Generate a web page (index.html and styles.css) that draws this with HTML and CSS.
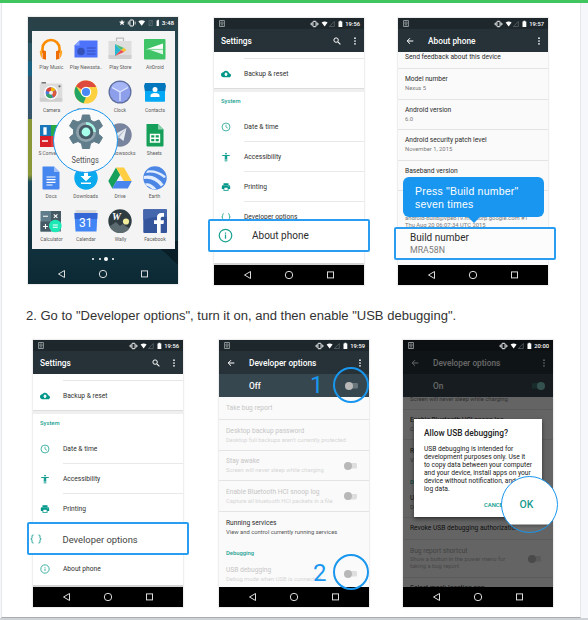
FILE: index.html
```html
<!DOCTYPE html>
<html lang="en">
<head>
<meta charset="utf-8">
<title>Enable USB debugging</title>
<link rel="stylesheet" href="styles.css">
</head>
<body>
<svg width="0" height="0" class="defs">
  <symbol id="sim" viewBox="0 0 6 7"><path d="M.6.5h4.8v6H.6z" fill="none" stroke="#aab0b3" stroke-width=".8"/><path d="M2 2h2v2H2zM1.8 5h2.4" stroke="#aab0b3" stroke-width=".6" fill="none"/></symbol>
  <symbol id="tray" viewBox="0 0 34 8">
    <rect x="2.9" y="1.300" width="3.200" height="5.400" rx=".7" fill="none" stroke="#fff" stroke-width="1"/>
    <path d="M1.500 2.600v2.800M7.500 2.600v2.800M.5 3.500v1M8.500 3.500v1" stroke="#fff" stroke-width=".7"/>
    <path d="M11.600 2.400q3-2 6 0L14.600 6.500z" fill="#fff"/>
    <path d="M24.300 1.500v5H19.400z" fill="none" stroke="#69757a" stroke-width=".6"/>
    <path d="M28.500 1.500h1V.8h1.800v.7h1v5.600h-3.800z" fill="#fff"/>
  </symbol>
  <symbol id="search" viewBox="0 0 8 8"><circle cx="3.100" cy="3.100" r="2.200" fill="none" stroke="#fff" stroke-width="1"/><path d="M4.800 4.800l2.600 2.600" stroke="#fff" stroke-width="1.100"/></symbol>
  <symbol id="more" viewBox="0 0 4 8"><circle cx="2" cy="1.200" r=".85" fill="#fff"/><circle cx="2" cy="4" r=".85" fill="#fff"/><circle cx="2" cy="6.800" r=".85" fill="#fff"/></symbol>
  <symbol id="back" viewBox="0 0 8 8"><path d="M7.300 4H1.300M4 1.200L1.200 4 4 6.800" fill="none" stroke="#fff" stroke-width="1"/></symbol>
  <symbol id="nav" viewBox="0 0 150 20"><path d="M36.500 6.500v7L30.500 10z" fill="none" stroke="#ddd" stroke-width="1"/><circle cx="75" cy="10" r="3.700" fill="none" stroke="#ddd" stroke-width="1"/><rect x="113.500" y="6.900" width="6" height="6" fill="none" stroke="#ddd" stroke-width="1"/></symbol>
  <symbol id="cloud" viewBox="0 0 24 24"><path fill="#009688" d="M19.350 10.040C18.670 6.590 15.640 4 12 4 9.110 4 6.600 5.640 5.350 8.040 2.340 8.360 0 10.910 0 14c0 3.310 2.690 6 6 6h13c2.760 0 5-2.240 5-5 0-2.640-2.050-4.780-4.650-4.960zM14 13v4h-4v-4H7l5-5 5 5h-3z"/></symbol>
  <symbol id="clock" viewBox="0 0 24 24"><circle cx="12" cy="12" r="9.500" fill="none" stroke="#26a699" stroke-width="2"/><path d="M12 6.500V12l4.500 3" fill="none" stroke="#26a699" stroke-width="1.800"/></symbol>
  <symbol id="access" viewBox="0 0 24 24"><path fill="#149f91" d="M12 1.500a2.200 2.200 0 1 1 0 4.400 2.200 2.200 0 0 1 0-4.400zM21 9.300h-6V22.500h-2.100v-6h-1.800v6H9V9.300H3V7h18z"/></symbol>
  <symbol id="print" viewBox="0 0 24 24"><path fill="#009688" d="M19 8H5c-1.660 0-3 1.340-3 3v6h4v4h12v-4h4v-6c0-1.660-1.340-3-3-3zm-3 11H8v-5h8v5zm3-7c-.55 0-1-.45-1-1s.45-1 1-1 1 .45 1 1-.45 1-1 1zm-1-9H6v4h12V3z"/></symbol>
  <symbol id="braces" viewBox="0 0 24 24"><path fill="none" stroke="#26a699" stroke-width="2" d="M7 4H6Q4 4 4 6v3.500Q4 12 1.500 12 4 12 4 14.500V18q0 2 2 2h1M17 4h1q2 0 2 2v3.500q0 2.500 2.500 2.500Q20 12 20 14.500V18q0 2-2 2h-1"/></symbol>
  <symbol id="info" viewBox="0 0 24 24"><circle cx="12" cy="12" r="10" fill="none" stroke="#1aa192" stroke-width="2"/><path fill="#1aa192" d="M11 10.500h2V17h-2zM11 7h2v2h-2z"/></symbol>
</svg>

<div class="topbar"></div>
<main class="card">
  <section class="shots first">

    <div class="phone launcher">
      <div class="wall-status">
        <svg width="40" height="8" viewBox="0 0 40 8"><path d="M3 .6l.8 2 2.200.1-1.700 1.400.6 2.200L3 5.100 1.100 6.300l.6-2.200L0 2.700l2.200-.1z" fill="#fff"/><rect x="10.900" y="1" width="3.600" height="6" rx=".6" fill="none" stroke="#fff"/><path d="M9.300 2.500v3M16.100 2.500v3" stroke="#fff" stroke-width=".8"/><path d="M19.300 2.300q3.400-2 6.800 0L22.700 6.800z" fill="#fff"/><path d="M30 1.500h3.300v5h-3.300zM30 6.500l3.300-5" stroke="#66787f" stroke-width=".6" fill="none"/><path d="M37.600 1.500h1V.8h1.300v6.300h-2.300z" fill="#fff"/></svg>
        <span>3:48</span>
      </div>
      <div class="drawer">
        <div class="app"><svg viewBox="0 0 24 24"><path d="M3.500 16V11.500a8.500 8.500 0 0 1 17 0V16" fill="none" stroke="#fb8c00" stroke-width="2.600"/><path d="M.8 14L3 12.500V21Q.8 19 .8 14zM23.200 14L21 12.500V21q2.200-2 2.200-7z" fill="#ffa726"/><path d="M3.500 13l3.500 1.200v8.500l-3.500-1zM20.500 13L17 14.200v8.500l3.500-1z" fill="#ef6c00"/></svg><span>Play Music</span></div>
        <div class="app"><svg viewBox="0 0 24 24"><path d="M5.500 3.500H23.500v17H.5V8.500z" fill="#4d73fb"/><path d="M.5 8.500h5v-5z" fill="#86a1ff"/><circle cx="7" cy="14.500" r="3.800" fill="#3451b8"/><path d="M13 11h8.500M13 14h8.500M13 17h8.500" stroke="#3c5bd0" stroke-width="1.500"/></svg><span>Play Newssta..</span></div>
        <div class="app"><svg viewBox="0 0 24 24"><path d="M8.500 5V1.200h7V5" fill="none" stroke="#bdbdbd" stroke-width="1.200"/><path d="M.5 4h23v17q0 1-1 1h-21q-1 0-1-1z" fill="#dedede"/><path d="M.5 18h23v3q0 1-1 1h-21q-1 0-1-1z" fill="#cfcfcf"/><path d="M7 7l6 6-6 6z" fill="#29b6d0"/><path d="M7 7l9 4-3 2z" fill="#50bd77"/><path d="M13 13l3-2 2.500 2L16 15z" fill="#fbc02d"/><path d="M13 13l3 2-9 4z" fill="#ed4b55"/></svg><span>Play Store</span></div>
        <div class="app"><svg viewBox="0 0 24 24"><rect x="1" y="2" width="21.500" height="20.500" rx="1" fill="#3ec466"/><path d="M2.500 12.500L20 6.500v6z" fill="#fff"/><path d="M6 12.500h14v5z" fill="#dff5e5"/><path d="M2.500 12.300H20" stroke="#3ec466" stroke-width=".5"/></svg><span>AirDroid</span></div>

        <div class="app"><svg viewBox="0 0 24 24"><path d="M2.500 2h4.500v2H2.500z" fill="#777"/><rect x=".8" y="3.500" width="22.500" height="18.500" rx="1" fill="#dcdcdc"/><path d="M.8 18h22.500v3.500H.8z" fill="#cfcfcf"/><circle cx="20.500" cy="6.300" r="1.100" fill="#666"/><circle cx="12" cy="12.700" r="7" fill="#fafafa"/><circle cx="12" cy="12.700" r="5.400" fill="#4b7bd6"/><path d="M12 12.700V7.300a5.400 5.400 0 0 1 4.700 2.700z" fill="#f4b400"/><path d="M12 12.700V7.300A5.400 5.400 0 0 0 7 10.700z" fill="#db4437"/><path d="M12 12.700l5-2.200a5.400 5.400 0 0 1-2.500 7z" fill="#e0593c"/><path d="M12 12.700L7 15a5.400 5.400 0 0 0 6 3z" fill="#33a362"/><circle cx="12" cy="12.700" r="2" fill="#eee"/></svg><span>Camera</span></div>
        <div class="app"><svg viewBox="0 0 24 24"><circle cx="12" cy="12" r="11.500" fill="#fcd03f"/><path d="M12 12L2 6.300A11.500 11.500 0 0 1 22.300 7H12z" fill="#de4b3e"/><path d="M2 6.300L7.500 14.500 12 17l-2.500 6.200A11.500 11.500 0 0 1 2 6.300z" fill="#23a566"/><circle cx="12" cy="12" r="5.200" fill="#fff"/><circle cx="12" cy="12" r="4.100" fill="#4a89f4"/></svg><span>Chrome</span></div>
        <div class="app"><svg viewBox="0 0 24 24"><circle cx="12" cy="12" r="11.500" fill="#5c6c9c"/><circle cx="12" cy="12" r="10.300" fill="#8d9fea"/><path d="M12 12L3.300 7A10 10 0 0 1 20.700 7z" fill="#a5b5f5"/><path d="M12 21V12L4 7.500M12 12l8-4.500" stroke="#dfe6ff" stroke-width="1.300" fill="none"/></svg><span>Clock</span></div>
        <div class="app"><svg viewBox="0 0 24 24"><path d="M2 3h20l1 3-1 6H2L1 6z" fill="#0277bd"/><path d="M2 11h20v10q0 .8-.8.8H2.800q-.8 0-.8-.8z" fill="#03a9f4"/><circle cx="12" cy="9.500" r="2.500" fill="#fff"/><path d="M7.500 17v-1.500q0-2.500 4.500-2.500t4.500 2.500V17z" fill="#fff"/></svg><span>Contacts</span></div>

        <div class="app"><svg viewBox="0 0 24 24"><path d="M1 2h11v11H1z" fill="#1976b9"/><path d="M12 2h11v11H12z" fill="#26a844"/><path d="M1 13h11v11H1z" fill="#d81f28"/><path d="M12 13h11v11H12z" fill="#e53935"/><path d="M5 5h2v6H5zM3 18h6" stroke="#fff" stroke-width="1.300" fill="#fff"/></svg><span>S Converter</span></div>
        <div class="app"></div>
        <div class="app"><svg viewBox="0 0 24 24"><circle cx="12" cy="12" r="11.700" fill="#78849e"/><path d="M4.500 12.500L18.500 5l-3 13-4.500-3.500z" fill="#e6eaf1"/><path d="M18.500 5L9 14v4l2-3.500z" fill="#aeb8ca"/></svg><span>Shadowsocks</span></div>
        <div class="app"><svg viewBox="0 0 24 24"><path d="M3.500 1H15l5.500 5.500v16q0 1-1 1h-15q-1 0-1-1z" fill="#169f59"/><path d="M15 1v5.500h5.500z" fill="#8bd0ad"/><path d="M7.500 11.500h9v7.500h-9zM7.500 15.300h9M12 11.500v7.500" fill="none" stroke="#fff" stroke-width="1.400"/></svg><span>Sheets</span></div>

        <div class="app"><svg viewBox="0 0 24 24"><path d="M4 .5H15L20.500 6v16.500q0 1-1 1H4.500q-1 0-1-1V1.500q0-1 .5-1z" fill="#4686ef"/><path d="M15 .5V6h5.500z" fill="#a3c1f8"/><path d="M7.500 11h9M7.500 13.700h9M7.500 16.300h9M7.500 19h6" stroke="#fff" stroke-width="1.200"/></svg><span>Docs</span></div>
        <div class="app"><svg viewBox="0 0 24 24"><circle cx="12" cy="12" r="11.700" fill="#0ba9ee"/><path d="M10 5h4v5h3.500L12 15.300 6.500 10H10zM7 16.500h10V18H7z" fill="#fff"/></svg><span>Downloads</span></div>
        <div class="app"><svg viewBox="0 0 24 24"><path d="M8 1.500L.3 15l4 7.500 7.900-13.800z" fill="#15a05c"/><path d="M8 1.500h8L23.800 15h-8z" fill="#ffce42"/><path d="M8.500 15h15.300l-4 7.500H4.300z" fill="#4885ed"/></svg><span>Drive</span></div>
        <div class="app"><svg viewBox="0 0 24 24"><circle cx="12" cy="12" r="11.700" fill="#4c86e5"/><path d="M4.500 4.500Q14 3.500 22.500 10 23 12 21 12 12 5 3 7zM1 10q11-2.500 19.500 8.500L18 20.500Q11 11.500.7 13zM2 17.500q6-1 11.500 5.500-2 .7-4 .3Q6 20 3 19.500z" fill="#e2edff"/></svg><span>Earth</span></div>

        <div class="app"><svg viewBox="0 0 24 24"><path d="M1.500 2h20.500v20.500H1.500z" fill="#607d8b"/><path d="M12 2h10v10.500H12zM1.500 12.500H12v10H1.500z" fill="#455a64"/><path d="M4 7.300h5M14.800 5.300l3.600 3.600M18.400 5.300l-3.600 3.600M4 17.500h5M6.500 15v5" stroke="#fff" stroke-width="1.100"/><circle cx="16.300" cy="17" r="6.300" fill="#1de9b6"/><path d="M13.800 16h5M13.800 18.300h5" stroke="#fff" stroke-width="1.100"/></svg><span>Calculator</span></div>
        <div class="app cal"><svg viewBox="0 0 24 24"><path d="M1.500 1.200h21V6h-21z" fill="#d8d8d8"/><path d="M.5 4h23l-1 18.500h-21z" fill="#4285f4"/><path d="M.5 4h23l-.3 6H.8z" fill="#3367d6"/></svg><b>31</b><span>Calendar</span></div>
        <div class="app wally"><svg viewBox="0 0 24 24"><circle cx="12" cy="12" r="11.700" fill="#2f3d43"/><path d="M1.500 17.500L8 13l4 4 2.500-2 7 4.500A11.700 11.700 0 0 1 1.500 17.500z" fill="#5c6b70"/><circle cx="18" cy="12.500" r="3.100" fill="#f3ee9c"/></svg><b>W</b><span>Wally</span></div>
        <div class="app"><svg viewBox="0 0 24 24"><rect x=".3" y=".3" width="23.700" height="23.700" rx="1" fill="#34549c"/><path d="M.3 1.300q0-1 1-1H23q1 0 1 1V8Q12 6 .3 11z" fill="#4467ae"/><path d="M14 24v-9h-3v-3.700h3V8.500Q14 4 18.500 4H21v3.700h-1.800q-1.500 0-1.500 1.500v2.100H21l-.5 3.700h-2.800v9z" fill="#fff"/></svg><span>Facebook</span></div>
      </div>
      <div class="dots"><i></i><i></i><i class="on"></i><i></i></div>
      <svg class="navicons" width="150" height="20"><use href="#nav"/></svg>
      <div class="lens">
        <svg width="36" height="36" viewBox="0 0 36 36"><path d="M14.500 1h7l1 5 3.500 2 5-2 3.500 6-4 3.500v4.500l4 3.500-3.500 6-5-2-3.500 2-1 5h-7l-1-5-3.500-2-5 2-3.500-6 4-3.500v-4.500l-4-3.500L5 6l5 2 3.500-2z" fill="#607d8b" stroke="#607d8b" stroke-linejoin="round"/><circle cx="18" cy="18" r="10" fill="#8fa3ad"/><path d="M18 8a10 10 0 0 1 10 10h-4a6 6 0 0 0-6-6z" fill="#a7f5e4"/><circle cx="18" cy="18" r="7.300" fill="#455a64"/><circle cx="18" cy="18" r="4.400" fill="#a7ffeb"/></svg>
        <span>Settings</span>
      </div>
    </div>

    <div class="phone settings">
      <div class="status"><svg width="6" height="7"><use href="#sim"/></svg><span class="grow"></span><svg width="34" height="8"><use href="#tray"/></svg><span class="time">19:56</span></div>
      <div class="bar"><b>Settings</b><svg width="8" height="8"><use href="#search"/></svg><svg class="menu" width="4" height="8"><use href="#more"/></svg></div>
      <div class="screen white">
        <div class="stub"></div>
        <div class="item backup"><svg><use href="#cloud"/></svg><span>Backup &amp; reset</span></div>
        <div class="band"></div>
        <div class="section">System</div>
        <div class="item"><svg><use href="#clock"/></svg><span>Date &amp; time</span></div>
        <div class="item"><svg><use href="#access"/></svg><span>Accessibility</span></div>
        <div class="item"><svg><use href="#print"/></svg><span>Printing</span></div>
        <div class="item last"><svg><use href="#braces"/></svg><span>Developer options</span></div>
      </div>
      <div class="navbar"><svg width="150" height="20"><use href="#nav"/></svg></div>
      <div class="focus about"><svg width="15" height="15"><use href="#info"/></svg><span>About phone</span></div>
    </div>

    <div class="phone detail">
      <div class="status"><svg width="6" height="7"><use href="#sim"/></svg><span class="grow"></span><svg width="34" height="8"><use href="#tray"/></svg><span class="time">19:57</span></div>
      <div class="bar sub"><svg width="8" height="8"><use href="#back"/></svg><b>About phone</b><svg class="menu" width="4" height="8"><use href="#more"/></svg></div>
      <div class="screen">
        <div class="row top"><span>Send feedback about this device</span></div>
        <div class="row"><span>Model number</span><small>Nexus 5</small></div>
        <div class="row"><span>Android version</span><small>6.0</small></div>
        <div class="row"><span>Android security patch level</span><small>November 1, 2015</small></div>
        <div class="row"><span>Baseband version</span><small>&nbsp;</small></div>
        <div class="row kernel"><small>android-build@vpeb19.mtv.corp.google.com #1</small><small>Thu Aug 20 06:07:34 UTC 2015</small></div>
      </div>
      <div class="navbar"><svg width="150" height="20"><use href="#nav"/></svg></div>
      <div class="tip">Press "Build number"<br>seven times</div>
      <div class="focus build"><span>Build number</span><small>MRA58N</small></div>
    </div>
  </section>

  <p class="step">2. Go to "Developer options", turn it on, and then enable "USB debugging".</p>

  <section class="shots second">
    <div class="phone settings">
      <div class="status"><svg width="6" height="7"><use href="#sim"/></svg><span class="grow"></span><svg width="34" height="8"><use href="#tray"/></svg><span class="time">19:56</span></div>
      <div class="bar"><b>Settings</b><svg width="8" height="8"><use href="#search"/></svg><svg class="menu" width="4" height="8"><use href="#more"/></svg></div>
      <div class="screen white">
        <div class="stub"></div>
        <div class="item backup"><svg><use href="#cloud"/></svg><span>Backup &amp; reset</span></div>
        <div class="band"></div>
        <div class="section">System</div>
        <div class="item"><svg><use href="#clock"/></svg><span>Date &amp; time</span></div>
        <div class="item"><svg><use href="#access"/></svg><span>Accessibility</span></div>
        <div class="item"><svg><use href="#print"/></svg><span>Printing</span></div>
        <div class="item gap"></div>
        <div class="item last"><svg><use href="#info"/></svg><span>About phone</span></div>
      </div>
      <div class="navbar"><svg width="150" height="20"><use href="#nav"/></svg></div>
      <div class="focus dev"><svg width="12" height="12"><use href="#braces"/></svg><span>Developer options</span></div>
    </div>

    <div class="phone options">
      <div class="status"><svg width="6" height="7"><use href="#sim"/></svg><span class="grow"></span><svg width="34" height="8"><use href="#tray"/></svg><span class="time">19:59</span></div>
      <div class="bar sub"><svg width="8" height="8"><use href="#back"/></svg><b>Developer options</b><svg class="menu" width="4" height="8"><use href="#more"/></svg></div>
      <div class="master"><b>Off</b><i class="switch"></i></div>
      <div class="screen">
        <div class="row short off"><span>Take bug report</span></div>
        <div class="row off"><span>Desktop backup password</span><small>Desktop full backups aren't currently protected</small></div>
        <div class="row off"><span>Stay awake</span><small>Screen will never sleep while charging</small><i class="switch"></i></div>
        <div class="row off"><span>Enable Bluetooth HCI snoop log</span><small>Capture all bluetooth HCI packets in a file</small><i class="switch"></i></div>
        <div class="row on"><span>Running services</span><small>View and control currently running services</small></div>
        <div class="section">Debugging</div>
        <div class="row off plain"><span>USB debugging</span><small>Debug mode when USB is connected</small><i class="switch"></i></div>
      </div>
      <div class="navbar"><svg width="150" height="20"><use href="#nav"/></svg></div>
      <div class="ring one"></div><div class="num n1">1</div>
      <div class="ring two"></div><div class="num n2">2</div>
    </div>

    <div class="phone confirm">
      <div class="status"><svg width="6" height="7"><use href="#sim"/></svg><span class="grow"></span><svg width="34" height="8"><use href="#tray"/></svg><span class="time">20:00</span></div>
      <div class="bar sub"><svg width="8" height="8"><use href="#back"/></svg><b>Developer options</b><svg class="menu" width="4" height="8"><use href="#more"/></svg></div>
      <div class="master"><b>On</b><i class="switch lit"></i></div>
      <div class="screen">
        <div class="row cut"><small>Screen will never sleep while charging</small></div>
        <div class="row"><span>Enable Bluetooth HCI snoop log</span><small>Capture all bluetooth HCI packets in a file</small></div>
        <div class="row plain"><span>Running services</span><small>View and control currently running services</small></div>
        <div class="section">Debugging</div>
        <div class="row"><span>USB debugging</span><small>Debug mode when USB is connected</small></div>
        <div class="row short"><span>Revoke USB debugging authorizations</span></div>
        <div class="row off tall"><span>Bug report shortcut</span><small>Show a button in the power menu for</small><small>taking a bug report</small><i class="switch"></i></div>
        <div class="row plain mock"><span>Select mock location app</span></div>
      </div>
      <div class="navbar"><svg width="150" height="20"><use href="#nav"/></svg></div>
      <div class="shade"></div>
      <div class="dialog">
        <b>Allow USB debugging?</b>
        <p>USB debugging is intended for<br>development purposes only. Use it<br>to copy data between your computer<br>and your device, install apps on your<br>device without notification, and read<br>log data.</p>
        <span class="cancel">CANCEL</span>
      </div>
      <div class="okring">OK</div>
    </div>
  </section>
</main>
</body>
</html>
```

FILE: styles.css
```css
* { box-sizing: border-box; }
html, body { height: 100%; }
body {
  margin: 0;
  overflow: hidden;
  background: #f5f7fa;
  font-family: Roboto, "Liberation Sans", sans-serif;
  color: #333;
  border-bottom: 2px solid #cfd3d8;
}
svg { display: block; flex: none; }
.defs { position: absolute; }
.topbar { height: 3px; background: #41c55f; }
.card {
  width: 580px;
  height: 615px;
  margin-left: 1px;
  background: #fff;
  border: solid #e6e8ea;
  border-width: 0 1px 1px;
  border-bottom-color: #a9adb1;
}
.shots { display: flex; }
.first { padding: 14px 0 0 26px; height: 296px; }
.second { padding: 0 0 0 31px; }
.step {
  margin: 0 0 0 24px;
  height: 41px;
  padding-top: 8px;
  font: 13.030px/18px "Liberation Sans", Arial, sans-serif;
  color: #333;
  white-space: nowrap;
}

.phone {
  position: relative;
  width: 150px;
  height: 267px;
  display: flex;
  flex-direction: column;
  white-space: nowrap;
  box-shadow: 0 0 1px 1px #eee;
}
.phone + .phone { margin-left: 36px; }
.phone + .phone + .phone { margin-left: 34px; }
.first .settings, .first .detail { margin-top: 1px; }

.status {
  height: 11px;
  padding: 0 4px 0 5px;
  background: #1e282c;
  display: flex;
  align-items: center;
}
.grow { flex: 1; }
.time { width: 15px; margin-left: 1px; text-align: right; font-size: 5.800px; font-weight: 500; color: #fff; }
.bar {
  height: 23px;
  padding: 0 7px;
  background: #263238;
  color: #fff;
  display: flex;
  align-items: center;
}
.bar b { flex: 1; font-size: 8.330px; font-weight: 500; }
.menu { margin-left: 12px; }
.sub { padding-left: 8px; }
.sub b { margin-left: 14px; }
.screen { flex: 1; min-height: 0; overflow: hidden; background: #fafafa; }
.white { background: #fff; border-bottom: 2px solid #d4d4d4; }
.navbar { height: 20px; background: #000; }

.stub { height: 7px; margin-left: 30px; border-bottom: 1px solid #e6e6e6; }
.item {
  height: 30px;
  padding-left: 7px;
  display: flex;
  align-items: center;
  font-size: 6.670px;
  color: #303030;
  background: linear-gradient(#e9e9e9, #e9e9e9) 30px 100% / 120px 1px no-repeat;
}
.item svg { width: 10px; height: 10px; margin-right: 13px; }
.backup, .last, .gap { background: none; }
.backup { height: 29px; }
.band { height: 4px; background: #efefef; border-top: 1px solid #ddd; }
.section { padding-left: 7px; font-size: 5.830px; font-weight: 500; color: #1aa192; line-height: 19px; height: 20px; }

.row {
  position: relative;
  height: 30.600px;
  padding-left: 7px;
  border-bottom: 1px solid #e4e4e4;
  display: flex;
  flex-direction: column;
  justify-content: center;
  font-size: 6.670px;
  line-height: 9px;
  color: #2c2c2c;
}
.row small { font-size: 5.830px; line-height: 8px; color: #7b7b7b; }
.top { height: 17px; justify-content: flex-start; line-height: 11px; }
.kernel { height: 50px; justify-content: flex-start; padding-top: 23.500px; }
.kernel small { line-height: 6.800px; }

.focus {
  position: absolute;
  width: 162px;
  height: 33px;
  border: 2px solid #2a9df0;
  border-radius: 2px;
  background: #fff;
  display: flex;
  align-items: center;
  color: #2b2b2b;
}
.about { left: -6.500px; top: 201px; padding-left: 8px; font-size: 10px; }
.about span { margin-left: 19.500px; }
.dev { left: -6px; top: 182px; padding: 1px 0 0 1px; font-size: 9.400px; color: #444; }
.dev span { margin-left: 20.500px; }
.build { left: -4px; top: 209px; padding-left: 14px; flex-direction: column; align-items: flex-start; justify-content: center; font-size: 10px; line-height: 13px; background: #fcfcfc; }
.build small { font-size: 8.800px; line-height: 12px; color: #7b7b7b; }
.tip {
  position: absolute;
  left: 5px;
  top: 159px;
  width: 141px;
  height: 40px;
  padding: 8px 0 0 12px;
  border-radius: 6px;
  background: #1996f0;
  color: #fff;
  font: 10.500px/13px "Liberation Sans", Arial, sans-serif;
  letter-spacing: .22px;
}
.tip::after {
  content: "";
  position: absolute;
  left: 64px;
  top: 39px;
  border: solid transparent;
  border-width: 7px 7px 0;
  border-top-color: #1996f0;
}

.master { height: 23px; padding: 0 11px 0 30px; background: #37474f; color: #fff; display: flex; align-items: center; justify-content: space-between; }
.master b { font-size: 8.330px; font-weight: 500; }
.switch { position: relative; width: 13px; height: 8px; border-radius: 3px; background: linear-gradient(#dedede, #dedede) 100% 50% / 11px 5.500px no-repeat; }
.switch::before { content: ""; display: block; width: 8px; height: 8px; border-radius: 50%; background: #b8b8b8; }
.master .switch { background-image: linear-gradient(#6b767c, #6b767c); }
.master .lit { background-image: linear-gradient(#3d6f6d, #3d6f6d); background-position: 0 50%; margin-right: -3px; }
.master .lit::before { margin-left: 5px; background: #80cbc4; }
.row .switch { position: absolute; right: 12px; top: 11px; }
.off { color: #c6c6c6; }
.off small { color: #d6d6d6; }
.on small { color: #555; }
.short { height: 22.500px; }
.plain, .on { border: 0; }
.options .screen { padding-top: .8px; }
.options .section { height: 20px; line-height: 20px; }
.options .section + .row { height: 23px; }
.options .section + .row .switch { top: 7px; }

.ring { position: absolute; width: 36px; height: 36px; border: 2px solid #1996ee; border-radius: 50%; }
.one { left: 114px; top: 27px; }
.two { left: 114px; top: 214px; }
.num { position: absolute; color: #1996ee; font: 400 24px/24px Roboto, sans-serif; }
.n1 { left: 91px; top: 33px; }
.n2 { left: 94px; top: 221px; }

.confirm .cut { height: 12.500px; }
.confirm .cut small { margin-top: -8px; }
.confirm .off { color: #a8a8a8; }
.confirm .off small { color: #b4b4b4; }
.confirm .section { height: 18px; line-height: 22px; }
.confirm .section + .row { height: 29px; }
.confirm .tall { height: 38px; }
.confirm .tall small { line-height: 7px; }
.tall .switch { top: 15px; }
.confirm .mock { height: 14px; justify-content: flex-end; line-height: 8px; }
.confirm .status { position: relative; z-index: 2; background: #0c1012; }
.shade { position: absolute; left: 0; right: 0; top: 11px; bottom: 20px; background: rgba(0, 0, 0, .6); }
.dialog {
  position: absolute;
  left: 11px;
  top: 79px;
  width: 128px;
  height: 98px;
  padding: 8px 10px 0;
  overflow: hidden;
  background: #fff;
  box-shadow: 0 2px 4px rgba(0, 0, 0, .5);
  color: #222;
}
.dialog b { display: block; font-size: 8.330px; line-height: 12px; font-weight: 500; }
.dialog p { margin: 7px 0 0; font-size: 6.670px; line-height: 7.900px; }
.cancel { display: block; margin: 8px 0 0 60px; font-size: 5.830px; line-height: 8px; font-weight: 500; color: #009688; }
.okring {
  position: absolute;
  left: 97.500px;
  top: 135.500px;
  width: 57px;
  height: 57px;
  padding-right: 5px;
  border: 1.500px solid #1996ee;
  border-radius: 50%;
  background: linear-gradient(#fff 47px, #555 48px, #6b6b6b 51px);
  color: #1a9c8f;
  font-size: 10.500px;
  font-weight: 500;
  line-height: 56px;
  text-align: center;
}

.launcher { background: linear-gradient(to top right, transparent 50%, #0a1e27 50.500%) 100% 92% / 26px 24px no-repeat, linear-gradient(#2b4047 0, #234650 12%, #1d4d59 60%, #123541 80%, #0c2934 100%); }
.launcher::before {
  content: "";
  position: absolute;
  left: 0;
  top: 26px;
  width: 4px;
  height: 139px;
  background: linear-gradient(#2d5664 0 18px, #1b6382 18px 33px, #35556a 33px 76px, #8b9837 76px 132px, transparent 139px);
}
.wall-status { height: 13.500px; padding: 0 4px 2px 0; display: flex; align-items: center; justify-content: flex-end; }
.wall-status span { margin-left: 3px; font-size: 6.200px; font-weight: 500; color: #fff; }
.drawer {
  position: relative;
  width: 143px;
  height: 218.500px;
  margin-left: 3.500px;
  padding: 6px 2.500px 0;
  background: #f4f4f4;
  display: grid;
  grid-template-columns: repeat(4, 34.500px);
  grid-auto-rows: 43px;
}
.app { position: relative; display: flex; flex-direction: column; align-items: center; }
.app svg { width: 24px; height: 24px; }
.app span { margin-top: 2px; font-size: 5.500px; line-height: 8px; color: #5c5c5c; transform: scaleX(.9); }
.app b { position: absolute; top: 7px; color: #fff; font-size: 12px; line-height: 14px; font-weight: 400; }
.wally b { top: 1px; left: 9px; font: italic 700 10px/14px "Liberation Serif", serif; }
.dots { height: 19px; display: flex; justify-content: center; align-items: center; gap: 4.500px; }
.dots i { width: 2px; height: 2px; border-radius: 50%; background: #fff; }
.dots .on { width: 4px; height: 4px; margin: 0 -1px; }
.navicons { margin-top: -4px; }
.lens {
  position: absolute;
  left: 25px;
  top: 91px;
  width: 65px;
  height: 65px;
  border: 1.500px solid #1996ee;
  border-radius: 50%;
  background: #fafafa;
  display: flex;
  flex-direction: column;
  align-items: center;
  padding-top: 5px;
}
.lens span { margin-top: 4px; font-size: 8.300px; line-height: 12px; color: #555; transform: scaleX(.9); }
```
